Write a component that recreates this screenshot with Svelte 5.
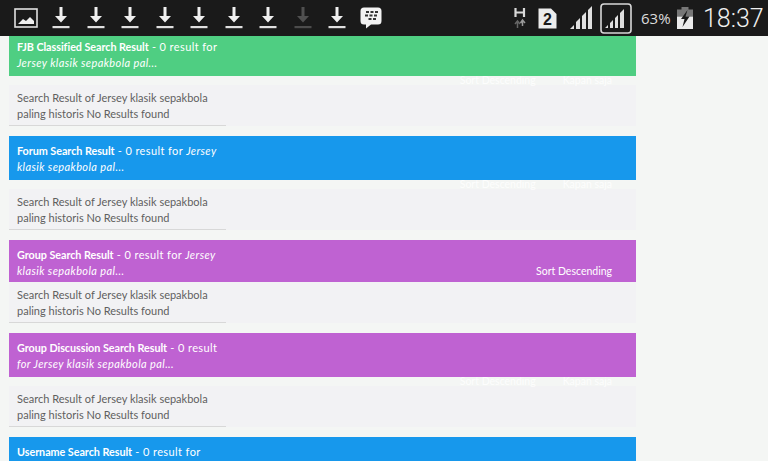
<script>
	const downloads = [1, 1, 1, 1, 1, 1, 1, 0, 1];
	const sections = [
		{ title: "FJB Classified Search Result", first: " - 0 result for", lead: "", rest: "Jersey klasik sepakbola pal...", tone: "green first" },
		{ title: "Forum Search Result", first: " - 0 result for ", lead: "Jersey", rest: "klasik sepakbola pal...", tone: "blue" },
		{ title: "Group Search Result", first: " - 0 result for ", lead: "Jersey", rest: "klasik sepakbola pal...", tone: "purple tight", sort_inside: true },
		{ title: "Group Discussion Search Result", first: " - 0 result", lead: "", rest: "for Jersey klasik sepakbola pal...", tone: "purple" },
		{ title: "Username Search Result", first: " - 0 result for", lead: "", rest: "", tone: "blue", cut: true }
	];
</script>

<style>
:global(body) {
	margin: 0;
	background: #f4f6f4;
	overflow: hidden;
}
.screen {
	height: 461px;
	overflow: hidden;
	font-family: "Lato", sans-serif;
	font-size: 11px;
	background: #f4f6f4;
}
.statusbar {
	height: 36px;
	background: #1a1a1a;
	color: #e8e8e8;
	display: flex;
	align-items: center;
	padding-left: 14px;
}
.statusbar svg {
	display: block;
	flex: none;
}
.downloads {
	display: flex;
	margin-left: 13px;
	gap: 14.5px;
}
.dim {
	opacity: 0.25;
}
.bbm {
	margin-left: 13px;
}
.right {
	margin-left: auto;
	display: flex;
	align-items: center;
}
.net {
	margin-right: 12px;
}
.sim {
	margin-right: 13px;
}
.bars {
	margin-right: 6px;
}
.boxed {
	margin-right: 9px;
}
.percent {
	font-family: "Open Sans", sans-serif;
	font-size: 15px;
	width: 36px;
	color: #dcdcdc;
}
.battery {
	margin-right: 10px;
}
.clock {
	font-family: "Roboto", sans-serif;
	font-weight: 300;
	font-size: 25px;
	width: 65px;
	color: #f0f0f0;
}
.list {
	padding-left: 9px;
	width: 627px;
}
.section {
	margin-bottom: 10px;
}
.head {
	position: relative;
	color: #fff;
	padding: 7px 8px 5px;
	line-height: 16px;
	letter-spacing: 0.4px;
}
.head p {
	margin: 0;
	white-space: nowrap;
}
.head em {
	font-style: italic;
}
.head b {
	font-weight: 700;
	font-size: 10.8px;
	letter-spacing: -0.05px;
}
.green {
	background: #4fce82;
}
.blue {
	background: #1798ec;
}
.purple {
	background: #bf62d2;
}
.first {
	padding-top: 3px;
	padding-bottom: 5px;
}
.tight {
	padding-bottom: 3px;
}
.sort-inside {
	position: absolute;
	right: 24px;
	bottom: 3px;
	font-size: 10.5px;
	letter-spacing: 0;
}
.sort-row {
	height: 9px;
	display: flex;
	justify-content: flex-end;
	gap: 27px;
	padding-right: 24px;
	color: rgba(255, 255, 255, 0.85);
	font-size: 10.5px;
	line-height: 9px;
}
.box {
	background: #f2f2f4;
	color: #5f5f5f;
	padding: 5px 0 4px 8px;
	line-height: 16px;
}
.box p {
	margin: 0;
	width: 205px;
}
.rule {
	width: 217px;
	height: 1px;
	background: #d8d8d8;
	margin-top: -1px;
	position: relative;
}
</style>

<div class="screen">
	<div class="statusbar">
		<svg width="24" height="20" viewBox="0 0 24 20">
			<rect x="1" y="1" width="22" height="18" fill="none" stroke="#e0e0e0" stroke-width="1.6" />
			<path d="M4 16 L9 11 L12 13 L16 9 L20 13 L20 16 Z" fill="#f0f0f0" />
		</svg>
		<div class="downloads">
			{#each downloads as on}
				<svg class:dim={!on} width="20" height="24" viewBox="0 0 20 24">
					<path d="M8.5 1 H11.5 V10 H16 L10 16.5 L4 10 H8.5 Z" fill="#f0f0f0" />
					<rect x="1.5" y="20" width="17" height="2.2" fill="#e0e0e0" />
				</svg>
			{/each}
		</div>
		<svg class="bbm" width="22" height="22" viewBox="0 0 22 22">
			<path d="M4 0.5 H18 Q21.5 0.5 21.5 4 V14 Q21.5 17.5 18 17.5 H11 L6 21.5 V17.5 H4 Q0.5 17.5 0.5 14 V4 Q0.5 0.5 4 0.5 Z" fill="#f2f2f2" />
			<g fill="#333">
				<rect x="6" y="4" width="3" height="2" /><rect x="10.5" y="4" width="3" height="2" /><rect x="15" y="4" width="3" height="2" />
				<rect x="5" y="7.5" width="3" height="2" /><rect x="9.5" y="7.5" width="3" height="2" /><rect x="14" y="7.5" width="3" height="2" />
				<rect x="8.5" y="11" width="3" height="2" /><rect x="13" y="11" width="3" height="2" />
			</g>
		</svg>
		<div class="right">
			<svg class="net" width="12" height="22" viewBox="0 0 12 22">
				<path d="M1.5 1 V10 M10 1 V10 M1.5 5.5 H10" stroke="#d8d8d8" stroke-width="2.2" fill="none" />
				<path d="M3.5 21 V15 M1 17 L3.5 14 L6 17" stroke="#666" stroke-width="1.5" fill="none" />
				<path d="M8.5 13 V19 M6.5 16 L8.5 13 L11 16" stroke="#999" stroke-width="1.5" fill="none" />
			</svg>
			<svg class="sim" width="19" height="21" viewBox="0 0 19 21">
				<path d="M0.5 0.5 H13 L18.5 6 V20.5 H0.5 Z" fill="#ececec" />
				<text x="9.5" y="17" text-anchor="middle" font-family="Liberation Sans" font-weight="700" font-size="16" fill="#1a1a1a">2</text>
			</svg>
			<svg class="bars" width="24" height="24" viewBox="0 0 24 24">
				<path d="M0 23 L4 19 V23 Z M6 23 V16 L10 12 V23 Z M12 23 V10 L16 6 V23 Z M18 23 V4 L22 0 V23 Z" fill="#e0e0e0" />
			</svg>
			<svg class="boxed" width="32" height="31" viewBox="0 0 32 31">
				<rect x="1" y="1" width="30" height="29" rx="3" fill="none" stroke="#d8d8d8" stroke-width="1.6" />
				<path d="M5 25 L8 22 V25 Z M10 25 V20 L13 17 V25 Z M15 25 V15 L18 12 V25 Z M20 25 V10 L24 6 V25 Z" fill="#e0e0e0" />
			</svg>
			<span class="percent">63%</span>
			<svg class="battery" width="16" height="22" viewBox="0 0 16 22">
				<rect x="4.5" y="0" width="7" height="3" fill="#777" />
				<rect x="0" y="2.5" width="16" height="7" fill="#777" />
				<rect x="0" y="9.5" width="16" height="12.5" fill="#ececec" />
				<path d="M10.5 3 L4 12 H7.5 L5.5 20 L12.5 9.5 H8.5 Z" fill="#1a1a1a" />
			</svg>
			<span class="clock">18:37</span>
		</div>
	</div>

	<div class="list">
		{#each sections as section}
			<div class="section">
				<div class="head {section.tone}">
					<p><b>{section.title}</b>{section.first}<em>{section.lead}</em></p>
					{#if section.rest}
						<p><em>{section.rest}</em></p>
					{/if}
					{#if section.sort_inside}
						<span class="sort-inside">Sort Descending</span>
					{/if}
				</div>
				{#if !section.cut}
					{#if !section.sort_inside}
						<div class="sort-row"><span>Sort Descending</span><span>Kapan saja</span></div>
					{/if}
					<div class="box">
						<p>Search Result of Jersey klasik sepakbola paling historis No Results found</p>
					</div>
					<div class="rule"></div>
				{/if}
			</div>
		{/each}
	</div>
</div>
